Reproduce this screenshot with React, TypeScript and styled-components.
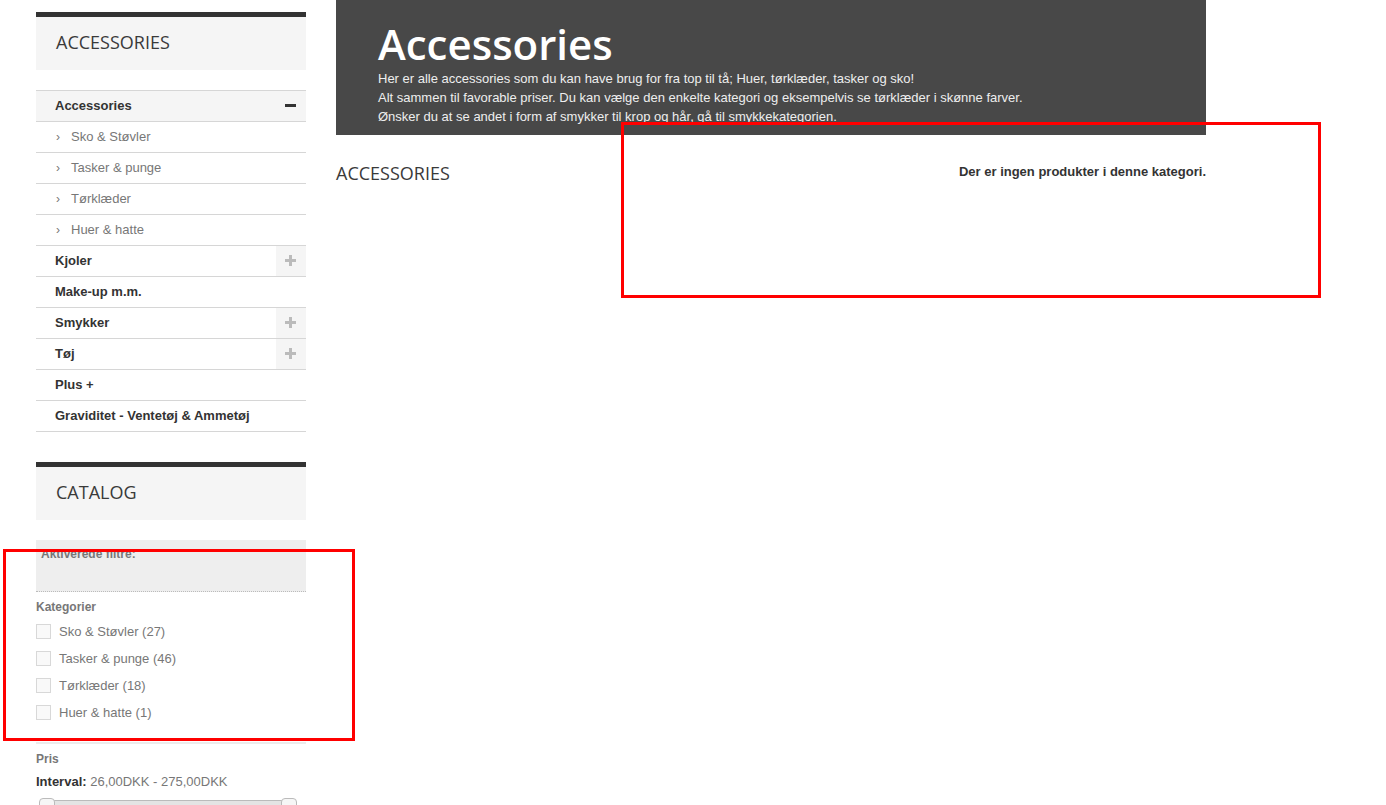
import styled, { createGlobalStyle } from "styled-components";

const GlobalStyle = createGlobalStyle`
  body {
    margin: 0;
    background: #fff;
    font-family: "Liberation Sans", Arial, sans-serif;
    font-size: 13px;
    color: #333;
  }
`;

const Page = styled.div`
  position: relative;
  display: flex;
  align-items: flex-start;
  gap: 30px;
  padding-left: 36px;
  height: 805px;
  overflow: hidden;
`;

const Sidebar = styled.aside`
  width: 270px;
  padding-top: 12px;
  display: flex;
  flex-direction: column;
`;

const BlockTitle = styled.h2`
  margin: 0;
  border-top: 5px solid #333;
  background: #f5f5f5;
  height: 49px;
  padding: 0 20px 4px;
  display: flex;
  align-items: center;
  font-family: "Open Sans", sans-serif;
  font-weight: 500;
  font-size: 18px;
  color: #3a3a3a;
  text-transform: uppercase;
`;

const CatList = styled.ul`
  list-style: none;
  margin: 20px 0 0;
  padding: 0;
  border-bottom: 1px solid #d6d6d6;
`;

const CatRow = styled.li<{ $active?: boolean; $sub?: boolean }>`
  display: flex;
  align-items: center;
  height: 30px;
  border-top: 1px solid #d6d6d6;
  background: ${(p) => (p.$active ? "#f5f5f5" : "#fff")};
  padding-left: ${(p) => (p.$sub ? "20px" : "19px")};
  font-weight: ${(p) => (p.$sub ? 400 : 700)};
  color: ${(p) => (p.$sub ? "#777" : "#333")};
  line-height: 28px;
`;

const Chevron = styled.span`
  width: 15px;
  font-size: 12px;
  color: #777;
`;

const Label = styled.span`
  flex: 1;
`;

const Toggle = styled.span<{ $open?: boolean }>`
  position: relative;
  align-self: stretch;
  width: 30px;
  background: ${(p) => (p.$open ? "transparent" : "#f5f5f5")};
  &::before,
  &::after {
    content: "";
    position: absolute;
    background: ${(p) => (p.$open ? "#333" : "#bbb")};
  }
  &::before {
    left: 9px;
    top: 13px;
    width: 11px;
    height: 3px;
  }
  &::after {
    display: ${(p) => (p.$open ? "none" : "block")};
    left: 13px;
    top: 9px;
    width: 3px;
    height: 11px;
  }
`;

const Catalog = styled.div`
  margin-top: 30px;
`;

const ActiveFilters = styled.div`
  margin-top: 20px;
  height: 52px;
  background: #eee;
  border-bottom: 1px dotted #bbb;
  padding: 7px 5px 0;
  box-sizing: border-box;
  font-weight: 700;
  font-size: 12px;
  color: #777;
`;

const FilterGroup = styled.div<{ $line?: boolean }>`
  padding-top: 8px;
  border-top: ${(p) => (p.$line ? "2px solid #ececec" : "none")};
`;

const FilterTitle = styled.div`
  font-weight: 700;
  font-size: 12px;
  color: #777;
  line-height: 14px;
`;

const CheckRow = styled.label`
  display: flex;
  align-items: center;
  height: 27px;
  gap: 8px;
  color: #777;
  font-size: 13px;
  &:first-of-type {
    margin-top: 4px;
  }
`;

const Box = styled.span`
  width: 13px;
  height: 13px;
  border: 1px solid #d8d8d8;
  background: #f9f9f9;
`;

const Range = styled.div`
  margin-top: 8px;
  font-size: 13px;
  color: #777;
  b {
    color: #333;
  }
`;

const Slider = styled.div`
  position: relative;
  margin: 11px 12px 0 6px;
  height: 10px;
  border: 1px solid #bbb;
  border-radius: 4px;
  background: #e4e4e4;
`;

const Handle = styled.span<{ $right?: boolean }>`
  position: absolute;
  top: -3px;
  ${(p) => (p.$right ? "right: -4px;" : "left: -4px;")}
  width: 14px;
  height: 18px;
  border: 1px solid #bbb;
  border-radius: 4px;
  background: #f6f6f6;
`;

const Spacer = styled.div`
  height: 16px;
`;

const Main = styled.main`
  width: 870px;
`;

const Banner = styled.div`
  background: #484848;
  height: 135px;
  padding: 19px 42px 0;
  box-sizing: border-box;
  color: #eee;
`;

const BannerTitle = styled.h1`
  margin: 0;
  font-family: "Open Sans", sans-serif;
  font-weight: 600;
  font-size: 42px;
  line-height: 50px;
  color: #fff;
`;

const BannerText = styled.p`
  margin: 0;
  font-size: 13px;
  line-height: 19px;
  color: #eee;
`;

const ContentHead = styled.div`
  display: flex;
  justify-content: space-between;
  align-items: center;
  margin-top: 26px;
`;

const SectionTitle = styled.h2`
  margin: 0;
  font-family: "Open Sans", sans-serif;
  font-weight: 500;
  font-size: 18px;
  color: #3a3a3a;
`;

const Empty = styled.p`
  margin: 0 0 3px;
  font-weight: 700;
  font-size: 13px;
  color: #333;
`;

const Mark = styled.div<{ $x: number; $y: number; $w: number; $h: number }>`
  position: absolute;
  left: ${(p) => p.$x}px;
  top: ${(p) => p.$y}px;
  width: ${(p) => p.$w}px;
  height: ${(p) => p.$h}px;
  border: 3px solid #f00;
  box-sizing: border-box;
  pointer-events: none;
`;

const subs = ["Sko & Støvler", "Tasker & punge", "Tørklæder", "Huer & hatte"];

const cats: { name: string; more?: boolean }[] = [
  { name: "Kjoler", more: true },
  { name: "Make-up m.m." },
  { name: "Smykker", more: true },
  { name: "Tøj", more: true },
  { name: "Plus +" },
  { name: "Graviditet - Ventetøj & Ammetøj" },
];

const filters = [
  "Sko & Støvler (27)",
  "Tasker & punge (46)",
  "Tørklæder (18)",
  "Huer & hatte (1)",
];

function App() {
  return (
    <>
      <GlobalStyle />
      <Page>
        <Sidebar>
          <BlockTitle>Accessories</BlockTitle>
          <CatList>
            <CatRow $active>
              <Label>Accessories</Label>
              <Toggle $open />
            </CatRow>
            {subs.map((s) => (
              <CatRow key={s} $sub>
                <Chevron>›</Chevron>
                <Label>{s}</Label>
              </CatRow>
            ))}
            {cats.map((c) => (
              <CatRow key={c.name}>
                <Label>{c.name}</Label>
                {c.more ? <Toggle /> : null}
              </CatRow>
            ))}
          </CatList>

          <Catalog>
            <BlockTitle>Catalog</BlockTitle>
            <ActiveFilters>Aktiverede filtre:</ActiveFilters>
            <FilterGroup>
              <FilterTitle>Kategorier</FilterTitle>
              {filters.map((f) => (
                <CheckRow key={f}>
                  <Box />
                  {f}
                </CheckRow>
              ))}
            </FilterGroup>
            <Spacer />
            <FilterGroup $line>
              <FilterTitle>Pris</FilterTitle>
              <Range>
                <b>Interval:</b> 26,00DKK - 275,00DKK
              </Range>
              <Slider>
                <Handle />
                <Handle $right />
              </Slider>
            </FilterGroup>
          </Catalog>
        </Sidebar>

        <Main>
          <Banner>
            <BannerTitle>Accessories</BannerTitle>
            <BannerText>
              Her er alle accessories som du kan have brug for fra top til tå; Huer, tørklæder, tasker og sko!
              <br />
              Alt sammen til favorable priser. Du kan vælge den enkelte kategori og eksempelvis se tørklæder i skønne farver.
              <br />
              Ønsker du at se andet i form af smykker til krop og hår, gå til smykkekategorien.
            </BannerText>
          </Banner>
          <ContentHead>
            <SectionTitle>ACCESSORIES</SectionTitle>
            <Empty>Der er ingen produkter i denne kategori.</Empty>
          </ContentHead>
        </Main>

        <Mark $x={621} $y={122} $w={700} $h={176} />
        <Mark $x={3} $y={549} $w={352} $h={192} />
      </Page>
    </>
  );
}

export default App;
